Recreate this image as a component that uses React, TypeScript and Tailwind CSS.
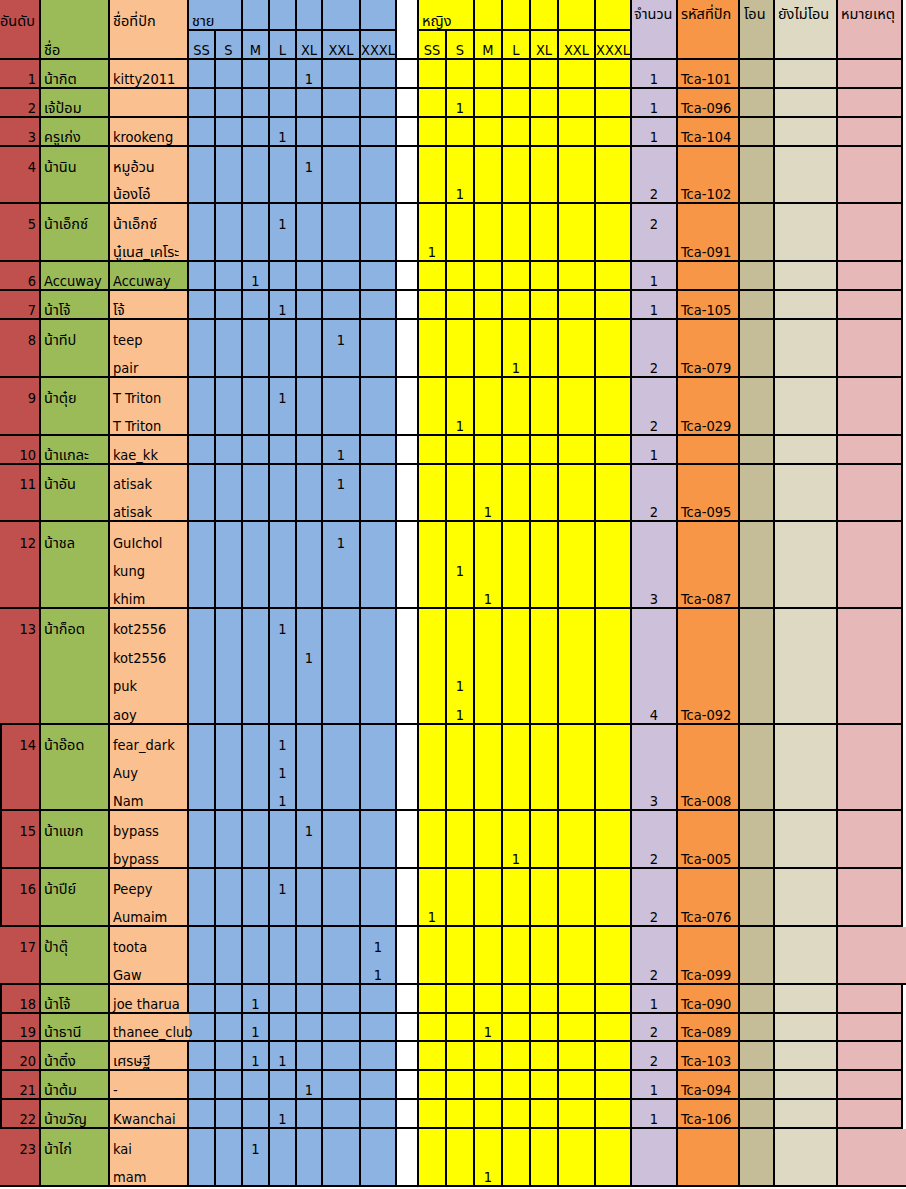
import React from 'react';

// one sub-line of a merged row is ~28.9px in the sheet
const LINE_H = 28.9;

type Line = { nick: string; m?: number[]; f?: number[] };

interface Row {
  no: number;
  name: string;
  lines: Line[];
  qty?: number;
  qtyLine?: number;
  code?: string;
  nickGreen?: boolean;
  edge?: boolean;
  wide?: boolean;
  spill?: boolean;
}

const rows: Row[] = [
  { no: 1, name: 'น้ากิต', lines: [{ nick: 'kitty2011', m: [4] }], qty: 1, code: 'Tca-101' },
  { no: 2, name: 'เจ้ป้อม', lines: [{ nick: '', f: [1] }], qty: 1, code: 'Tca-096' },
  { no: 3, name: 'ครูเก่ง', lines: [{ nick: 'krookeng', m: [3] }], qty: 1, code: 'Tca-104' },
  {
    no: 4,
    name: 'น้านิน',
    lines: [
      { nick: 'หมูอ้วน', m: [4] },
      { nick: 'น้องโอ๋', f: [1] },
    ],
    qty: 2,
    code: 'Tca-102',
  },
  {
    no: 5,
    name: 'น้าเอ็กซ์',
    lines: [
      { nick: 'น้าเอ็กซ์', m: [3] },
      { nick: 'นู๋เนส_เคโระ', f: [0] },
    ],
    qty: 2,
    qtyLine: 0,
    code: 'Tca-091',
  },
  { no: 6, name: 'Accuway', lines: [{ nick: 'Accuway', m: [2] }], qty: 1, nickGreen: true },
  { no: 7, name: 'น้าโจ้', lines: [{ nick: 'โจ้', m: [3] }], qty: 1, code: 'Tca-105' },
  {
    no: 8,
    name: 'น้าทีป',
    lines: [
      { nick: 'teep', m: [5] },
      { nick: 'pair', f: [3] },
    ],
    qty: 2,
    code: 'Tca-079',
  },
  {
    no: 9,
    name: 'น้าตุ๋ย',
    lines: [
      { nick: 'T Triton', m: [3] },
      { nick: 'T Triton', f: [1] },
    ],
    qty: 2,
    code: 'Tca-029',
  },
  { no: 10, name: 'น้าแกละ', lines: [{ nick: 'kae_kk', m: [5] }], qty: 1 },
  {
    no: 11,
    name: 'น้าอัน',
    lines: [
      { nick: 'atisak', m: [5] },
      { nick: 'atisak', f: [2] },
    ],
    qty: 2,
    code: 'Tca-095',
  },
  {
    no: 12,
    name: 'น้าชล',
    lines: [
      { nick: 'GuIchol', m: [5] },
      { nick: 'kung', f: [1] },
      { nick: 'khim', f: [2] },
    ],
    qty: 3,
    code: 'Tca-087',
  },
  {
    no: 13,
    name: 'น้าก็อต',
    lines: [
      { nick: 'kot2556', m: [3] },
      { nick: 'kot2556', m: [4] },
      { nick: 'puk', f: [1] },
      { nick: 'aoy', f: [1] },
    ],
    qty: 4,
    code: 'Tca-092',
  },
  {
    no: 14,
    name: 'น้าอ๊อด',
    lines: [
      { nick: 'fear_dark', m: [3] },
      { nick: 'Auy', m: [3] },
      { nick: 'Nam', m: [3] },
    ],
    qty: 3,
    code: 'Tca-008',
    edge: true,
  },
  {
    no: 15,
    name: 'น้าแขก',
    lines: [
      { nick: 'bypass', m: [4] },
      { nick: 'bypass', f: [3] },
    ],
    qty: 2,
    code: 'Tca-005',
    edge: true,
  },
  {
    no: 16,
    name: 'น้าปีย์',
    lines: [
      { nick: 'Peepy', m: [3] },
      { nick: 'Aumaim', f: [0] },
    ],
    qty: 2,
    code: 'Tca-076',
    edge: true,
  },
  {
    no: 17,
    name: 'ป้าตุ๊',
    lines: [
      { nick: 'toota', m: [6] },
      { nick: 'Gaw', m: [6] },
    ],
    qty: 2,
    code: 'Tca-099',
    wide: true,
  },
  { no: 18, name: 'น้าโจ้', lines: [{ nick: 'joe tharua', m: [2] }], qty: 1, code: 'Tca-090', edge: true },
  {
    no: 19,
    name: 'น้าธานี',
    lines: [{ nick: 'thanee_club', m: [2], f: [2] }],
    qty: 2,
    code: 'Tca-089',
    edge: true,
    spill: true,
  },
  { no: 20, name: 'น้าติ๋ง', lines: [{ nick: 'เศรษฐี', m: [2, 3] }], qty: 2, code: 'Tca-103', edge: true },
  { no: 21, name: 'น้าต้ม', lines: [{ nick: '-', m: [4] }], qty: 1, code: 'Tca-094', edge: true },
  { no: 22, name: 'น้าขวัญ', lines: [{ nick: 'Kwanchai', m: [3] }], qty: 1, code: 'Tca-106', edge: true },
  {
    no: 23,
    name: 'น้าไก่',
    lines: [
      { nick: 'kai', m: [2] },
      { nick: 'mam', f: [2] },
    ],
    wide: true,
  },
];

const sizes = ['SS', 'S', 'M', 'L', 'XL', 'XXL', 'XXXL'];
const maleW = ['w-[27px]', 'w-[27px]', 'w-[27px]', 'w-[27px]', 'w-[26px]', 'w-[38px]', 'w-[36px]'];
const femaleW = ['w-[28px]', 'w-[28px]', 'w-[28px]', 'w-[28px]', 'w-[28px]', 'w-[37px]', 'w-[36px]'];

// cells carry their own bottom edge; the right edge is added per cell
const base = 'flex shrink-0 flex-col border-b-2 border-black';
const cell = `${base} border-r-2`;
const ln = 'flex flex-1 items-end whitespace-nowrap leading-[15px]';

function BodyRow({ r }: { r: Row }) {
  const n = r.lines.length;
  const qi = r.qtyLine ?? n - 1;
  const blank = (k: number) => <div key={k} className={ln} />;

  return (
    <div className="flex shrink-0" style={{ height: n * LINE_H }}>
      <div className={`${cell} w-[41px] bg-[#c0504d] ${r.edge ? 'border-l-2' : ''}`}>
        <div className={`${ln} justify-end pr-[3px]`}>{r.no}</div>
        {r.lines.slice(1).map((_, k) => blank(k))}
      </div>
      <div className={`${cell} w-[69px] bg-[#9bbb59]`}>
        <div className={`${ln} pl-[3px]`}>{r.name}</div>
        {r.lines.slice(1).map((_, k) => blank(k))}
      </div>
      <div className={`${r.spill ? base : cell} w-[79px] ${r.nickGreen ? 'bg-[#9bbb59]' : 'bg-[#fac090]'}`}>
        {r.lines.map((l, k) => (
          <div key={k} className={`${ln} relative z-10 pl-[3px]`}>
            {l.nick}
          </div>
        ))}
      </div>
      {maleW.map((w, i) => (
        <div key={i} className={`${cell} ${w} bg-[#8db3e2]`}>
          {r.lines.map((l, k) => (
            <div key={k} className={`${ln} justify-center`}>
              {l.m?.includes(i) ? 1 : ''}
            </div>
          ))}
        </div>
      ))}
      <div className={`${cell} w-[22px] bg-white`} />
      {femaleW.map((w, i) => (
        <div key={i} className={`${cell} ${w} bg-[#ffff00]`}>
          {r.lines.map((l, k) => (
            <div key={k} className={`${ln} justify-center`}>
              {l.f?.includes(i) ? 1 : ''}
            </div>
          ))}
        </div>
      ))}
      <div className={`${cell} w-[46px] bg-[#ccc0da]`}>
        {r.lines.map((_, k) => (
          <div key={k} className={`${ln} justify-center`}>
            {k === qi && r.qty ? r.qty : ''}
          </div>
        ))}
      </div>
      <div className={`${cell} w-[62px] bg-[#f79646]`}>
        {r.lines.map((_, k) => (
          <div key={k} className={`${ln} pl-[3px]`}>
            {k === n - 1 && r.code ? r.code : ''}
          </div>
        ))}
      </div>
      <div className={`${cell} w-[35px] bg-[#c4bd97]`} />
      <div className={`${cell} w-[63px] bg-[#ddd9c3]`} />
      <div className={`${r.wide ? `${base} w-[68px]` : `${cell} w-[65px]`} bg-[#e6b9b8]`} />
    </div>
  );
}

function Header() {
  // left headers sit low in the merged cell, right ones higher up
  const topL = 'flex h-[31px] items-end whitespace-nowrap pb-[2px] leading-[15px]';
  const topR = 'flex h-[31px] items-end whitespace-nowrap pb-[9px] leading-[15px]';
  return (
    <div className="flex h-[60px] shrink-0">
      <div className={`${cell} w-[41px] bg-[#c0504d]`}>
        <div className={topL}>อันดับ</div>
      </div>
      <div className={`${cell} w-[69px] bg-[#9bbb59]`}>
        <div className="h-[31px]" />
        <div className={`${ln} pl-[3px]`}>ชื่อ</div>
      </div>
      <div className={`${cell} w-[79px] bg-[#fac090]`}>
        <div className={`${topL} pl-[3px]`}>ชื่อที่ปัก</div>
      </div>

      <div className="flex w-[208px] shrink-0 flex-col">
        <div className="flex h-[31px]">
          <div className={`${cell} w-[54px] bg-[#8db3e2]`}>
            <div className={`${ln} pl-[3px]`}>ชาย</div>
          </div>
          {maleW.slice(2).map((w, i) => (
            <div key={i} className={`${cell} ${w} bg-[#8db3e2]`} />
          ))}
        </div>
        <div className="flex flex-1">
          {maleW.map((w, i) => (
            <div key={i} className={`${cell} ${w} bg-[#8db3e2]`}>
              <div className={`${ln} justify-center`}>{sizes[i]}</div>
            </div>
          ))}
        </div>
      </div>

      <div className={`${cell} w-[22px] bg-white`} />

      <div className="flex w-[213px] shrink-0 flex-col">
        <div className="flex h-[31px]">
          <div className={`${cell} w-[56px] bg-[#ffff00]`}>
            <div className={`${ln} pl-[3px]`}>หญิง</div>
          </div>
          {femaleW.slice(2).map((w, i) => (
            <div key={i} className={`${cell} ${w} bg-[#ffff00]`} />
          ))}
        </div>
        <div className="flex flex-1">
          {femaleW.map((w, i) => (
            <div key={i} className={`${cell} ${w} bg-[#ffff00]`}>
              <div className={`${ln} justify-center`}>{sizes[i]}</div>
            </div>
          ))}
        </div>
      </div>

      <div className={`${cell} w-[46px] bg-[#ccc0da]`}>
        <div className={`${topR} pl-[2px]`}>จำนวน</div>
      </div>
      <div className={`${cell} w-[62px] bg-[#f79646]`}>
        <div className={`${topR} pl-[3px]`}>รหัสที่ปัก</div>
      </div>
      <div className={`${cell} w-[35px] bg-[#c4bd97]`}>
        <div className={`${topR} pl-[4px]`}>โอน</div>
      </div>
      <div className={`${cell} w-[63px] bg-[#ddd9c3]`}>
        <div className={`${topR} pl-[3px]`}>ยังไม่โอน</div>
      </div>
      <div className={`${cell} w-[65px] bg-[#e6b9b8]`}>
        <div className={`${topR} pl-[3px]`}>หมายเหตุ</div>
      </div>
    </div>
  );
}

export default function App() {
  return (
    <div className="h-[1189px] w-[906px] overflow-hidden bg-white font-['DejaVu_Sans_Condensed','DejaVu_Sans','Noto_Sans_Thai','Noto_Sans',sans-serif] text-[14.5px] text-black">
      <div className="flex flex-col">
        <Header />
        {rows.map((r) => (
          <BodyRow key={r.no} r={r} />
        ))}
      </div>
    </div>
  );
}
